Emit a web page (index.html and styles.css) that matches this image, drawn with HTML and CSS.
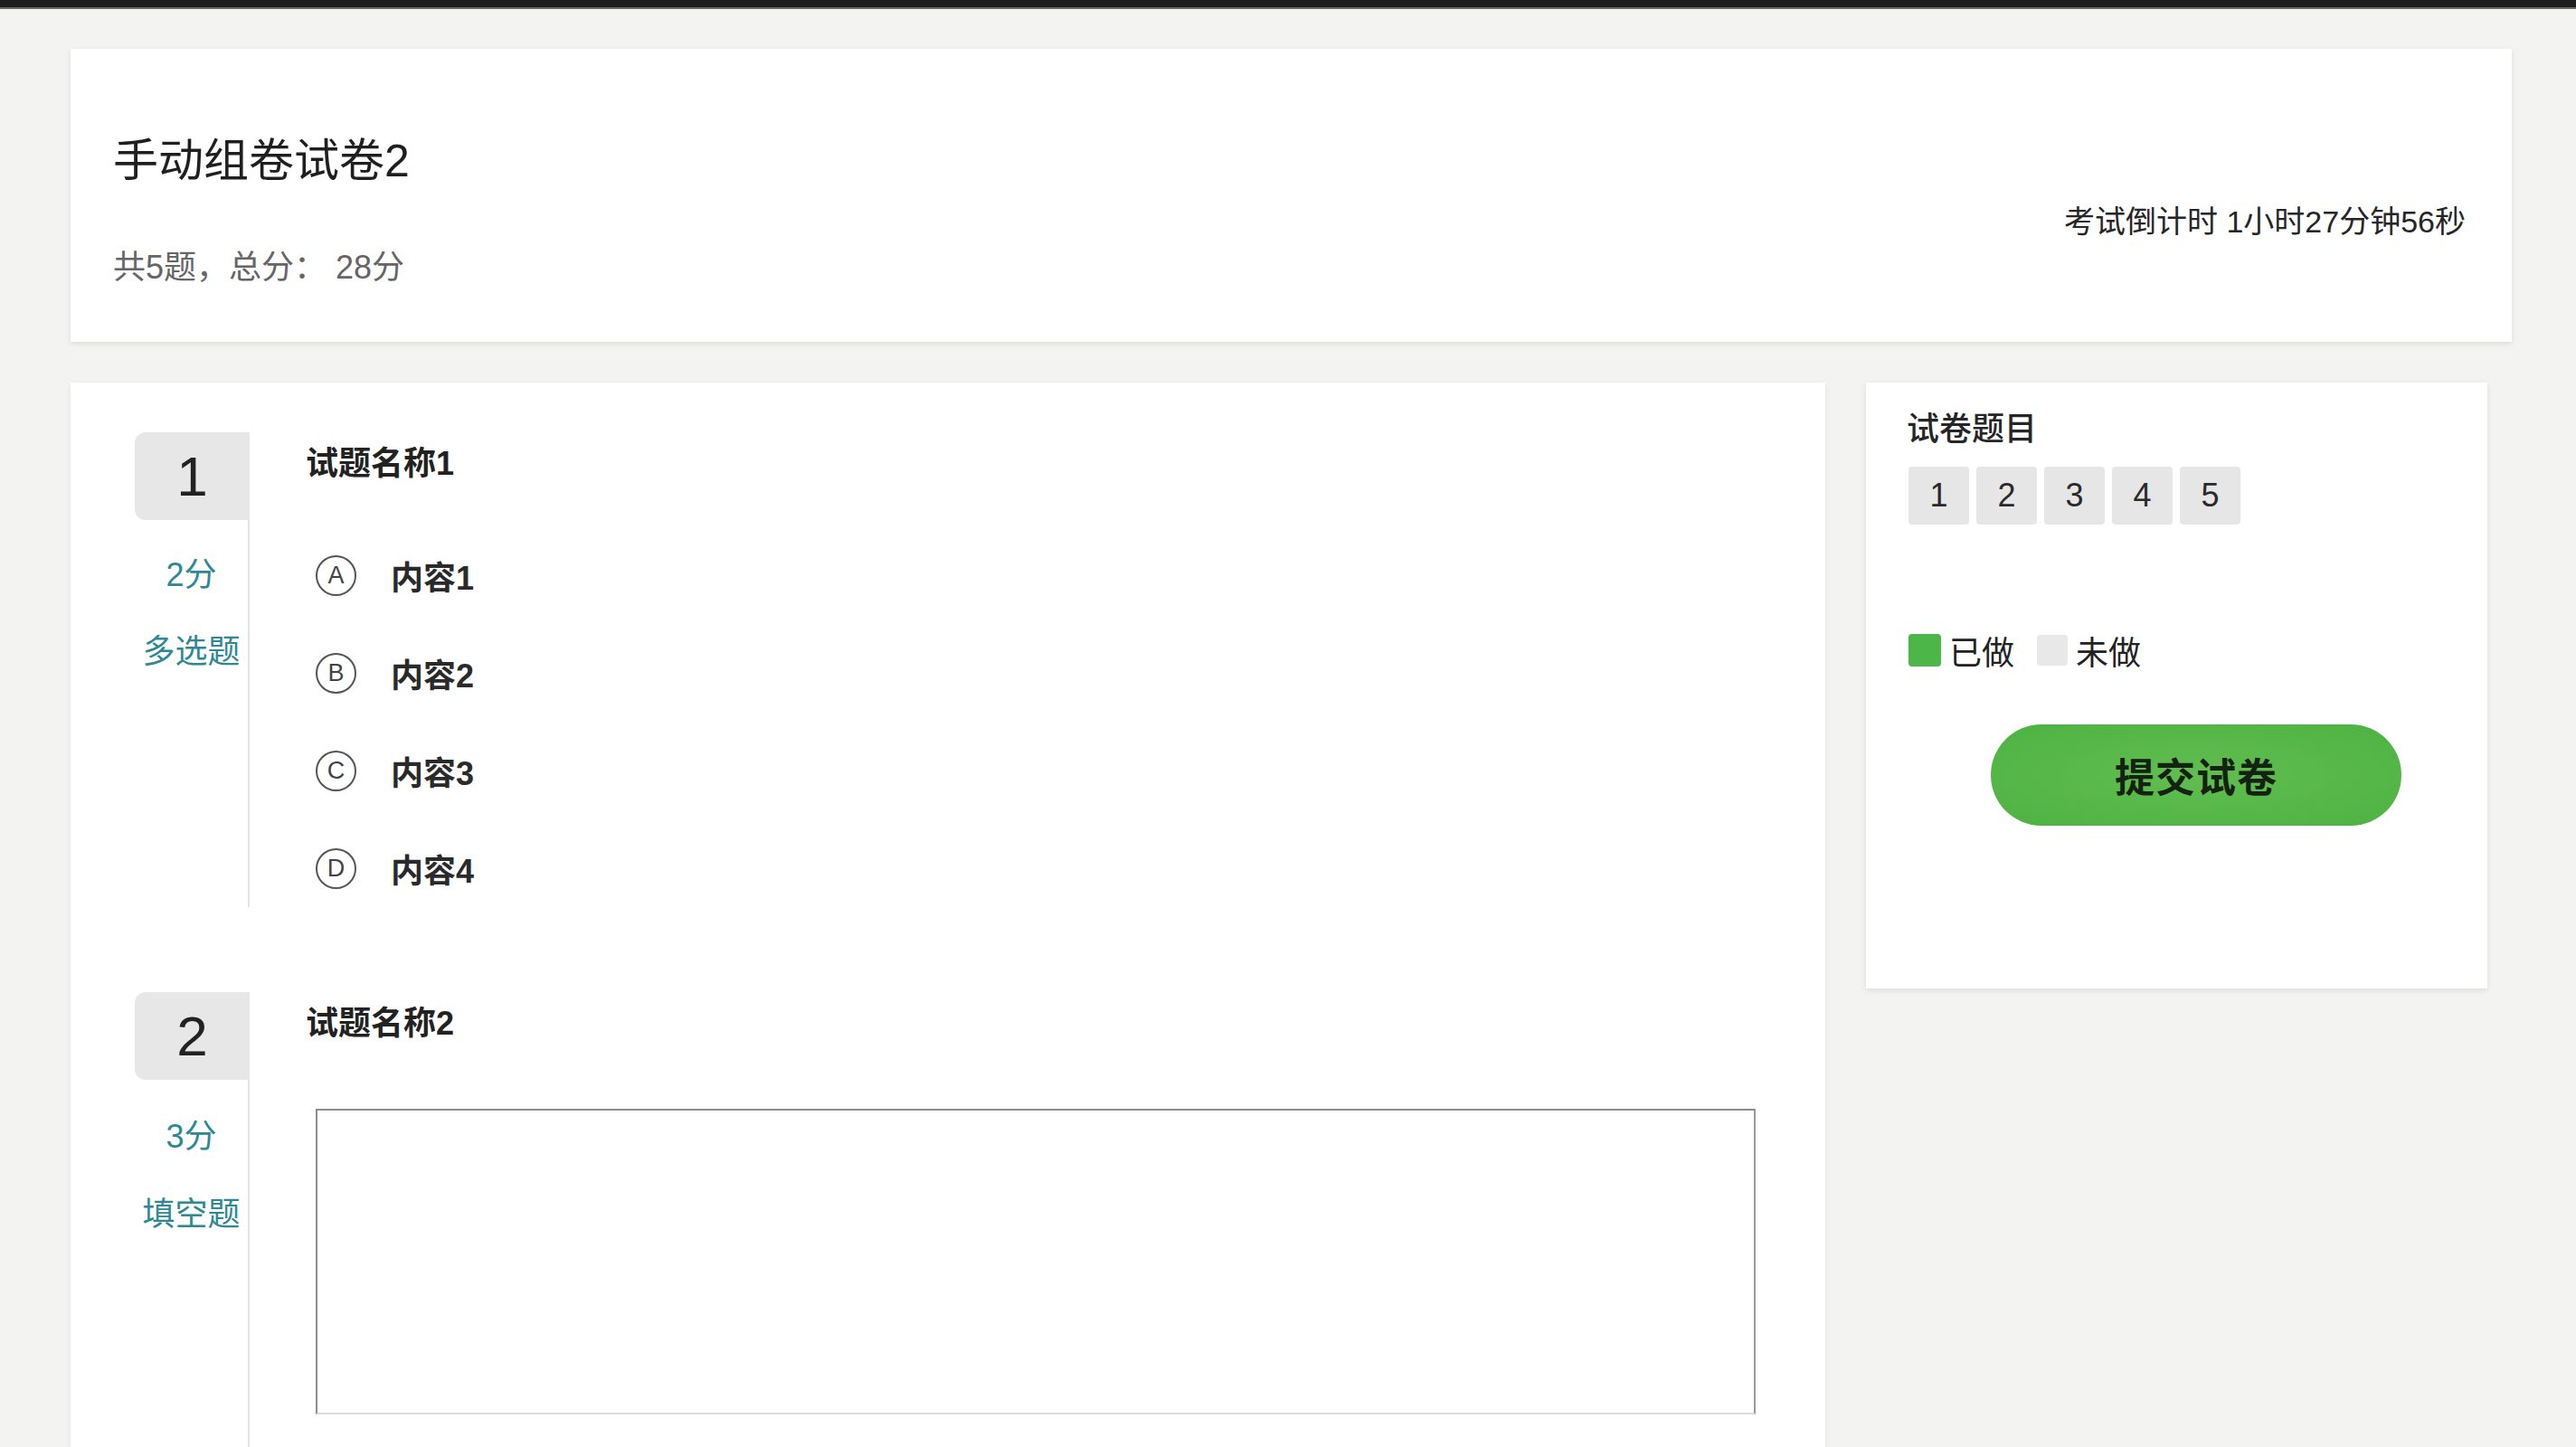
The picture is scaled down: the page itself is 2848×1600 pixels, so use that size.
FILE: index.html
```html
<!DOCTYPE html>
<html lang="zh-CN">
<head>
<meta charset="utf-8">
<title>手动组卷试卷2</title>
<link rel="stylesheet" href="styles.css">
</head>
<body>
<div class="topbar"></div>
<div class="page">
  <header class="paper-head">
    <div class="head-left">
      <h1 class="paper-title">手动组卷试卷2</h1>
      <div class="paper-meta">共5题，总分： 28分</div>
    </div>
    <div class="countdown">考试倒计时 1小时27分钟56秒</div>
  </header>

  <div class="main-row">
    <section class="questions">
      <div class="question">
        <div class="q-side">
          <div class="q-num">1</div>
          <div class="q-score">2分</div>
          <div class="q-type">多选题</div>
        </div>
        <div class="q-body">
          <div class="q-title">试题名称1</div>
          <ul class="options">
            <li class="option"><span class="opt-letter">A</span><span class="opt-text">内容1</span></li>
            <li class="option"><span class="opt-letter">B</span><span class="opt-text">内容2</span></li>
            <li class="option"><span class="opt-letter">C</span><span class="opt-text">内容3</span></li>
            <li class="option"><span class="opt-letter">D</span><span class="opt-text">内容4</span></li>
          </ul>
        </div>
      </div>

      <div class="question last">
        <div class="q-side">
          <div class="q-num">2</div>
          <div class="q-score">3分</div>
          <div class="q-type">填空题</div>
        </div>
        <div class="q-body">
          <div class="q-title">试题名称2</div>
          <div class="answer-box"></div>
        </div>
      </div>
    </section>

    <aside class="sidebar">
      <div class="side-title">试卷题目</div>
      <div class="nav-nums">
        <span class="nav-num">1</span>
        <span class="nav-num">2</span>
        <span class="nav-num">3</span>
        <span class="nav-num">4</span>
        <span class="nav-num">5</span>
      </div>
      <div class="legend">
        <span class="swatch done"></span><span class="legend-text">已做</span>
        <span class="swatch todo"></span><span class="legend-text">未做</span>
      </div>
      <div class="submit-wrap">
        <button class="submit">提交试卷</button>
      </div>
    </aside>
  </div>
</div>
</body>
</html>
```

FILE: styles.css
```css
* { box-sizing: border-box; }
html, body { margin: 0; padding: 0; }
body {
  background: #f3f3f1;
  font-family: "Liberation Sans", "Noto Sans CJK SC", sans-serif;
  color: #222;
  height: 1600px;
  overflow: hidden;
}
.topbar {
  height: 10px;
  background: #1d1d1d;
  border-bottom: 2px solid #6a6a6a;
}
.page {
  padding: 44px 71px 0 78px;
}
.paper-head {
  background: #fff;
  height: 324px;
  display: flex;
  justify-content: space-between;
  align-items: flex-start;
  padding: 0 51px 0 47px;
  box-shadow: 0 2px 6px rgba(0,0,0,0.10);
}
.paper-title {
  margin: 94px 0 0;
  font-size: 50px;
  line-height: 60px;
  font-weight: normal;
  color: #1f1f1f;
}
.paper-meta {
  margin-top: 63px;
  font-size: 36px;
  line-height: 50px;
  color: #666;
}
.countdown {
  margin-top: 166px;
  font-size: 34px;
  line-height: 50px;
  color: #262626;
}
.main-row {
  display: flex;
  align-items: flex-start;
  gap: 45px;
  margin-top: 45px;
}
.questions {
  width: 1940px;
  background: #fff;
  padding: 55px 77px 0 71px;
  height: 1200px;
  box-shadow: 0 2px 6px rgba(0,0,0,0.08);
}
.question {
  display: flex;
  margin-bottom: 94px;
}
.q-side {
  width: 127px;
  flex: none;
  border-right: 2px solid #e2e2e2;
  display: flex;
  flex-direction: column;
  align-items: center;
}
.q-num {
  width: 127px;
  margin-right: -2px;
  height: 97px;
  background: #e7e7e7;
  border-radius: 12px 0 0 12px;
  display: flex;
  align-items: center;
  justify-content: center;
  font-size: 62px;
  color: #222;
}
.q-score, .q-type {
  font-size: 36px;
  line-height: 50px;
  color: #2e8995;
}
.q-score { margin-top: 36px; }
.q-type { margin-top: 35px; }
.q-body {
  flex: 1;
  padding-left: 62px;
}
.q-title {
  font-size: 36px;
  line-height: 70px;
  font-weight: bold;
  color: #222;
}
.options {
  list-style: none;
  margin: 45px 0 0 11px;
  padding: 0;
  display: flex;
  flex-direction: column;
  gap: 22px;
}
.option {
  height: 86px;
  display: flex;
  align-items: center;
}
.opt-letter {
  width: 45px;
  height: 45px;
  border: 2px solid #555;
  border-radius: 50%;
  display: flex;
  align-items: center;
  justify-content: center;
  font-size: 27px;
  color: #444;
  flex: none;
}
.opt-text {
  margin-left: 38px;
  font-size: 36px;
  font-weight: bold;
  color: #2a2a2a;
}
.question.last .q-side { min-height: 520px; }
.question.last .q-score { margin-top: 38px; }
.question.last .q-type { margin-top: 36px; }
.answer-box {
  margin: 59px 0 0 11px;
  height: 338px;
  border-style: solid;
  border-width: 2px;
  border-color: #8c8c8c #9a9a9a #dcdcdc #8c8c8c;
  background: #fff;
}
.sidebar {
  width: 687px;
  height: 670px;
  background: #fff;
  padding: 27px 45px 0 45px;
  box-shadow: 0 2px 6px rgba(0,0,0,0.10);
}
.side-title {
  font-size: 36px;
  line-height: 50px;
  color: #262626;
  font-weight: 500;
}
.nav-nums {
  display: flex;
  gap: 8px;
  margin-top: 16px;
  padding-left: 2px;
}
.nav-num {
  width: 67px;
  height: 64px;
  background: #e6e6e6;
  border-radius: 4px;
  display: flex;
  align-items: center;
  justify-content: center;
  font-size: 36px;
  color: #2a2a2a;
}
.legend {
  display: flex;
  align-items: center;
  margin-top: 114px;
  padding-left: 2px;
  height: 50px;
}
.swatch {
  display: inline-block;
  border-radius: 4px;
}
.swatch.done {
  width: 36px;
  height: 36px;
  background: #4cb649;
}
.swatch.todo {
  width: 34px;
  height: 34px;
  background: #e8e8e8;
  margin-left: 25px;
}
.legend-text {
  font-size: 36px;
  color: #222;
  margin-left: 9px;
}
.submit-wrap {
  margin-top: 57px;
  padding-left: 93px;
}
.submit {
  width: 454px;
  height: 112px;
  border: none;
  border-radius: 56px;
  background: radial-gradient(ellipse at center, #62bd51 0%, #55b747 60%, #4db244 100%);
  font-family: "Liberation Sans", "Noto Sans CJK SC", sans-serif;
  font-size: 44px;
  font-weight: bold;
  color: #142212;
  letter-spacing: 1px;
}
```
